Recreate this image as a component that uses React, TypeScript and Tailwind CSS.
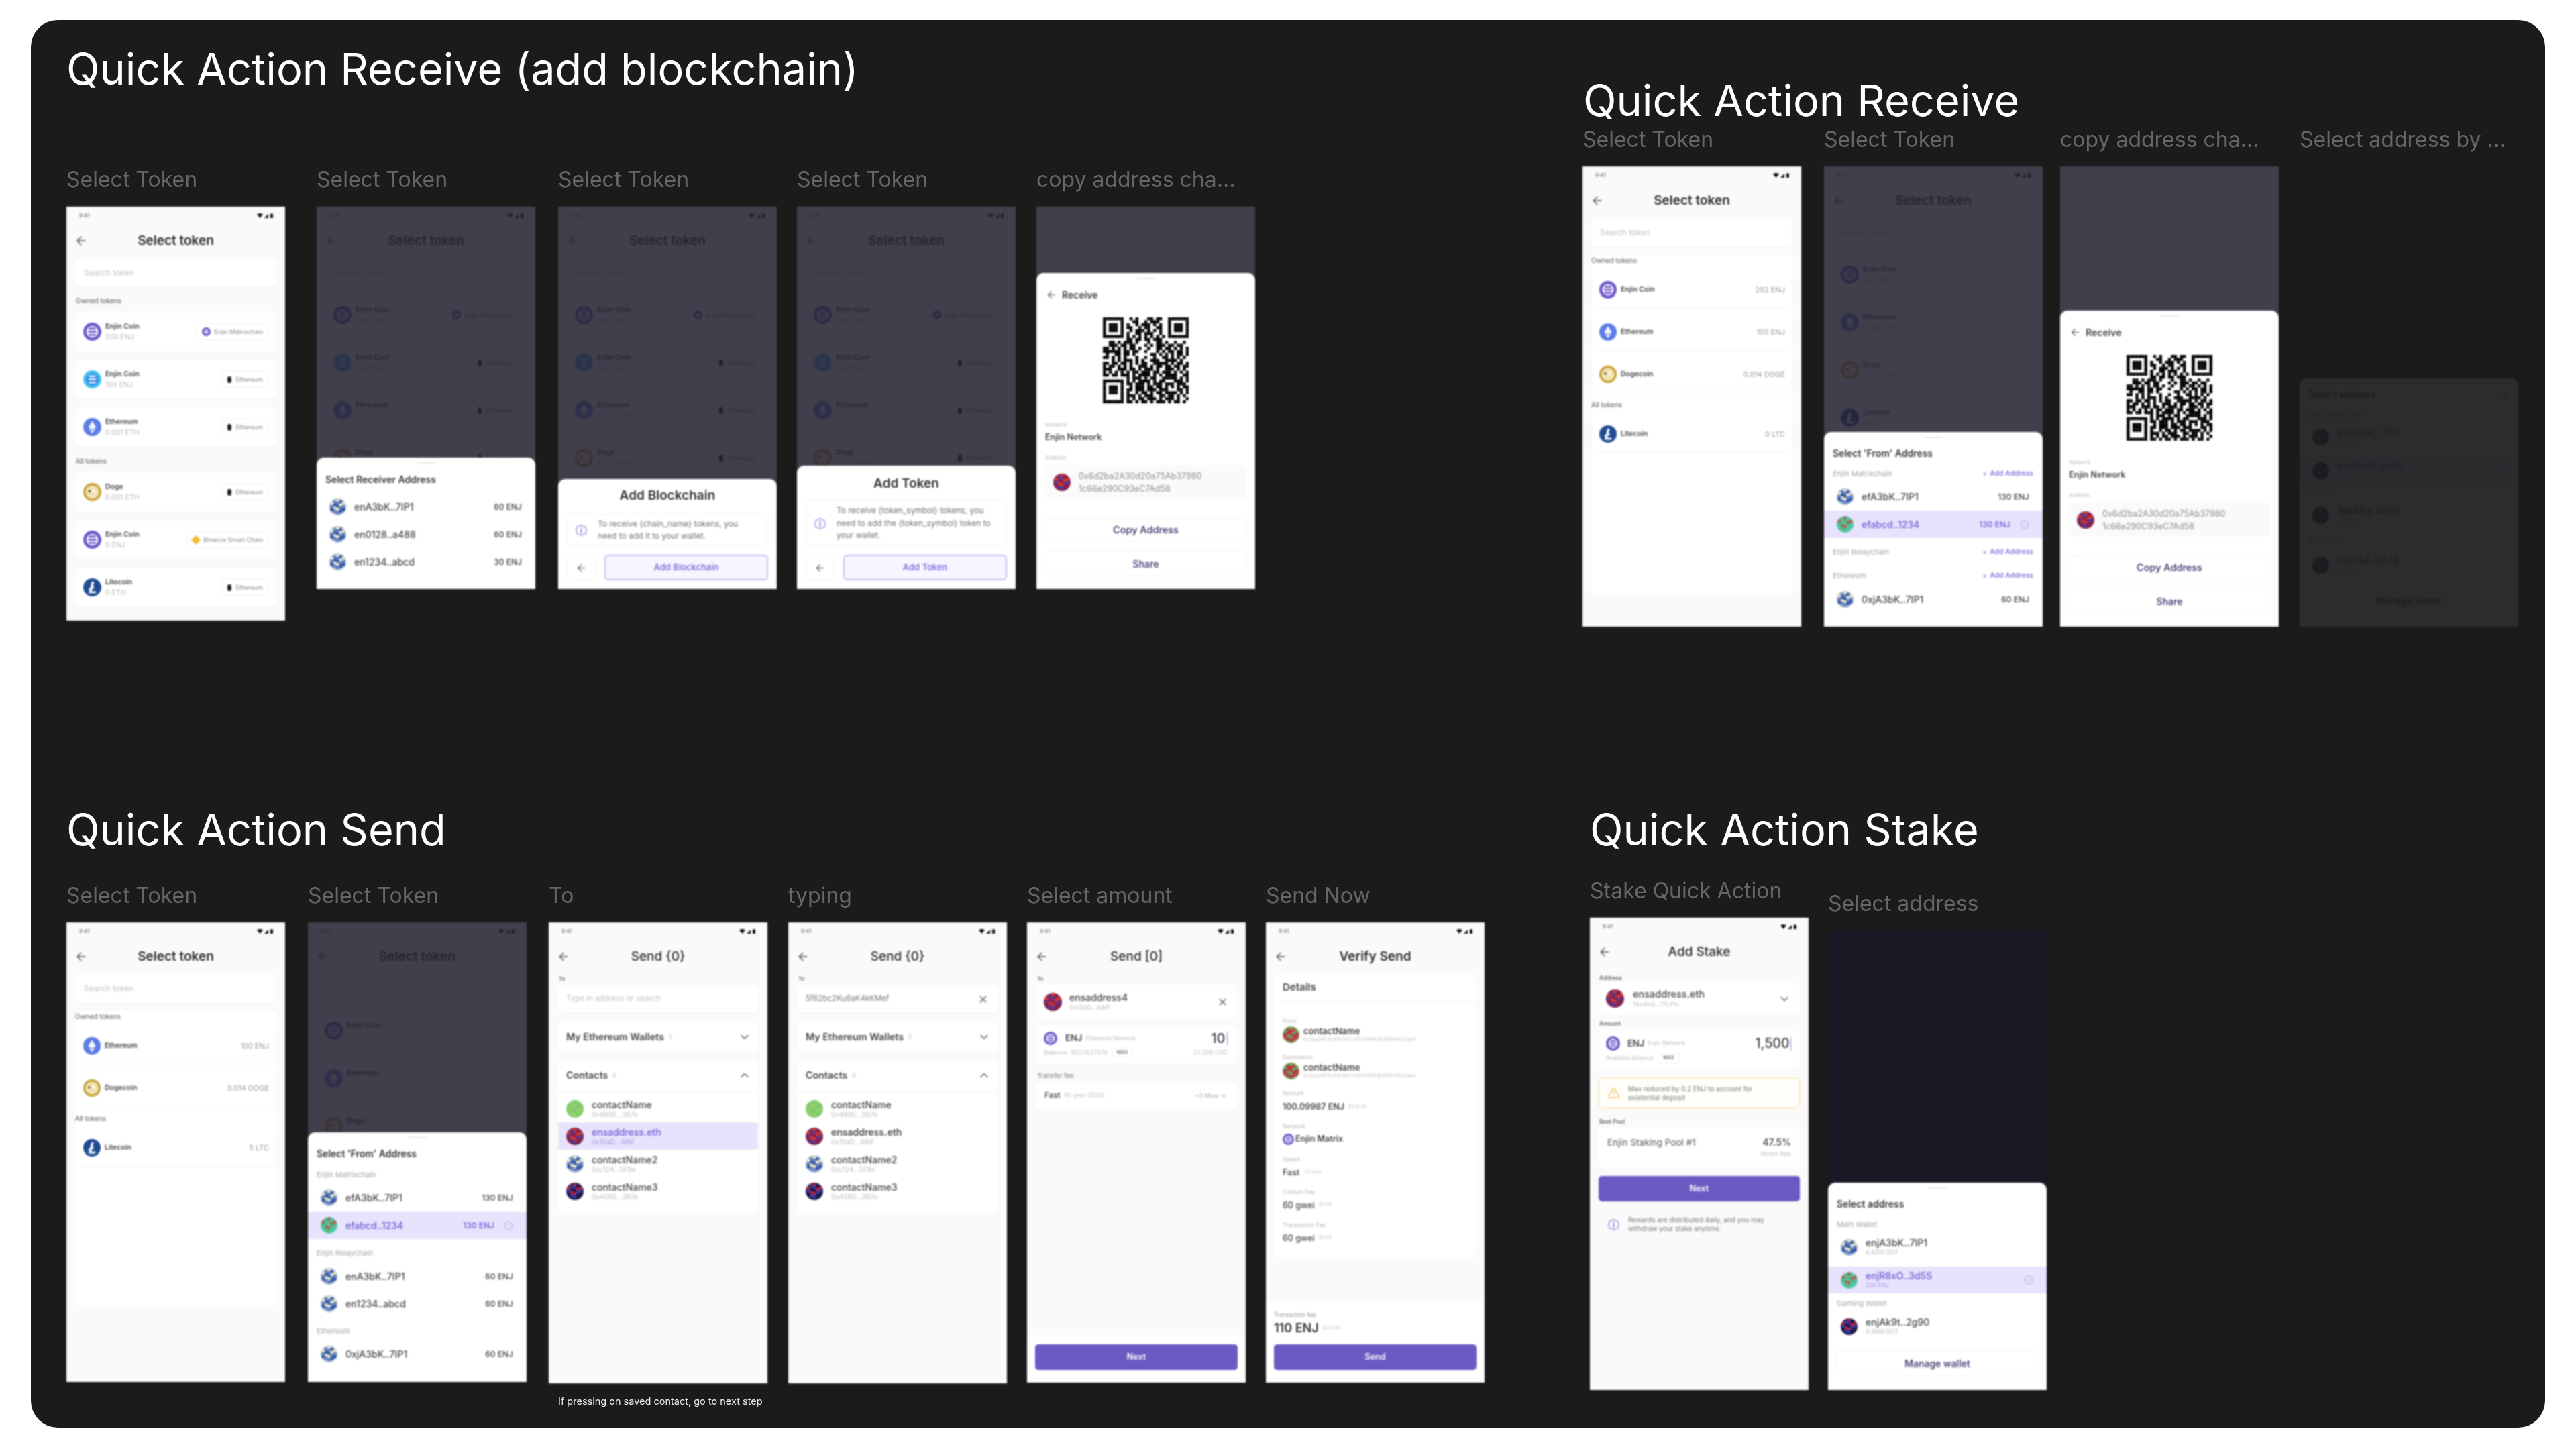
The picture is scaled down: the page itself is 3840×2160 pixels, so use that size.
import { ReactNode } from "react";
import { ArrowLeft, ChevronDown, ChevronUp, X, Plus, CircleCheck, TriangleAlert } from "lucide-react";

// ---- small drawings ----

const HEX_DOTS = [
  [16, 4], [16, 9.5], [16, 15], [16, 20.5], [16, 26.5],
  [10.5, 7], [10.5, 12.5], [10.5, 18.5], [10.5, 24],
  [21.5, 7], [21.5, 12.5], [21.5, 18.5], [21.5, 24],
  [5, 10], [5, 15.5], [5, 21],
  [27, 10], [27, 15.5], [27, 21],
];

const PALETTES: Record<string, string[]> = {
  blue: ["#a9b7d4", "#2f55a4", "#e9e4c4", "#5f82c4"],
  teal: ["#57cdb6", "#44c9b0", "#b5604c", "#5ab77c"],
  red: ["#7c2150", "#8d1f4c", "#d8342a", "#5a3a90"],
  navy: ["#1d1848", "#1d1848", "#c0203f", "#2a3fa8"],
  green: ["#7fce6b", "#86d266", "#79c873", "#9ccc6a"],
  moss: ["#6fa55a", "#c23c44", "#6fa55a", "#b33a44"],
};

function Avatar({ kind, size = 25 }: { kind: string; size?: number }) {
  const p = PALETTES[kind];
  return (
    <svg width={size} height={size} viewBox="0 0 32 32" className="shrink-0">
      <circle cx="16" cy="16" r="16" fill={p[0]} />
      {HEX_DOTS.map(([x, y], i) => (
        <circle key={i} cx={x} cy={y} r="3.300" fill={p[1 + (i * 7 + (x === 16 ? 1 : 0)) % 3]} />
      ))}
    </svg>
  );
}

function TokenIcon({ kind, size = 27 }: { kind: string; size?: number }) {
  if (kind === "enj" || kind === "enjBlue") {
    return (
      <svg width={size} height={size} viewBox="0 0 32 32" className="shrink-0">
        <circle cx="16" cy="16" r="16" fill={kind === "enj" ? "#6c56c9" : "#3fc1ef"} />
        <circle cx="16" cy="16" r="10.500" fill={kind === "enj" ? "#f4f1fd" : "#2c7ee0"} />
        <path d="M11 10.500h10M10 16h12M11 21.500h10" stroke={kind === "enj" ? "#6c56c9" : "#e8fbff"} strokeWidth="3" strokeLinecap="round" />
      </svg>
    );
  }
  if (kind === "eth") {
    return (
      <svg width={size} height={size} viewBox="0 0 32 32" className="shrink-0">
        <circle cx="16" cy="16" r="16" fill="#5b7be6" />
        <path d="M16 5l7 11.500-7 4.200-7-4.200zM16 22.600l6.600-4.100L16 27.500l-6.600-9z" fill="#f3f5ff" />
      </svg>
    );
  }
  if (kind === "doge") {
    return (
      <svg width={size} height={size} viewBox="0 0 32 32" className="shrink-0">
        <circle cx="16" cy="16" r="16" fill="#c6a032" />
        <circle cx="16" cy="16" r="12" fill="#f0e2b4" />
        <circle cx="11" cy="14.500" r="2" fill="#4d4030" />
        <circle cx="19" cy="14.500" r="3" fill="#fdf8e8" />
      </svg>
    );
  }
  return (
    <svg width={size} height={size} viewBox="0 0 32 32" className="shrink-0">
      <circle cx="16" cy="16" r="16" fill="#1f4a94" />
      <path d="M15 6h4.400l-2.600 10 3.400-1.200-.8 2.700-3.400 1.200-1.200 4.300H23l-1 3.500H9.600l1.900-6.500-2.400.8.7-2.500 2.400-.9z" fill="#fff" />
    </svg>
  );
}

function ChainDot({ kind }: { kind: string }) {
  if (kind === "enj") return <span className="h-[13px] w-[13px] shrink-0 rounded-full border-[3px] border-[#6c56c9] bg-[#c9bff0]" />;
  if (kind === "bnb") return <span className="h-[10px] w-[10px] shrink-0 rotate-45 bg-[#f3ba2f]" />;
  return <span className="h-[10px] w-[6px] shrink-0 rounded-full bg-[#222]" />;
}

function InfoBlob({ size = 18 }: { size?: number }) {
  return (
    <svg width={size} height={size} viewBox="0 0 20 20" fill="none" className="shrink-0">
      <path d="M10 1.500l3 2.200 3.600.6.7 3.500 1.200 2.200-1.200 2.200-.7 3.500-3.600.6-3 2.200-3-2.200-3.600-.6-.7-3.500L1.500 10l1.200-2.200.7-3.500 3.600-.6z" stroke="#a898e6" strokeWidth="1.600" />
      <path d="M10 6v1.200M10 9v5" stroke="#7d69d6" strokeWidth="1.600" strokeLinecap="round" />
    </svg>
  );
}

const QR_ROWS = [
  "#######..#.#...##.##..#######",
  "#.....#...##..#.###...#.....#",
  "#.###.#.#..#.###.#.#..#.###.#",
  "#.###.#.##..#.##..##..#.###.#",
  "#.###.#..#.###.#.#.#..#.###.#",
  "#.....#.#..##.###..#..#.....#",
  "#######.#.#.#.#.#.#.#.#######",
  "........##.##.##.###.........",
  "..##.#.###.#...#..##.#..#..#.",
  "..###.##.##...#.#.###.##.##..",
  "##.#.#.#.##.#..#..##.##.#.#.#",
  "######.##.##..#...#.#.##.##.#",
  ".#..##.##.#.....##.#.#.#.##.#",
  "##.#.#.#...#..#..#..##.#.#.#.",
  "...#.#.###.#.#..###..####.#..",
  "##.##.##.#.#.##..#####.#.##.#",
  "#.##.#.#.#..###.#.##.##.##.##",
  "###..###.##.#.###.#..###.#.#.",
  "#.#.#.#.#.##.###.##.###.#.#.#",
  "##.##.###.#.####.#.#.####..##",
  "........#.###.#.##..#####.#.#",
  "#######.#.#.####.#.##...###.#",
  "#.....#.##.###.#.###.###.###.",
  "#.###.#..#.###.##.##.#.#.#.##",
  "#.###.#.##.###.###.###...##.#",
  "#.###.#.#..#.##.#.##.####.#.#",
  "#.....#.###.#.###..##.##.#.#.",
  "#.....#.#.#.##.###.#.###.#..#",
  "#######.##.#.##.#.###.#.##.#.",
];

function QrCode() {
  return (
    <svg width="128" height="128" viewBox="0 0 29 29" className="mx-auto block">
      {QR_ROWS.map((row, y) =>
        row.split("").map((c, x) => (c === "#" ? <rect key={`${x}-${y}`} x={x} y={y} width="1.020" height="1.020" fill="#000" /> : null))
      )}
    </svg>
  );
}

function StatusIcons() {
  return (
    <svg width="25" height="7" viewBox="0 0 25 7">
      <path d="M0 1.500C3-.5 6-.5 9 1.500L4.500 7z" fill="#111" />
      <path d="M11 7l6-6v6z" fill="#111" />
      <rect x="20" y="0.500" width="4" height="6.500" rx="0.500" fill="#111" />
    </svg>
  );
}

// ---- phone building blocks ----

function StatusBar() {
  return (
    <div className="flex h-[26px] items-center justify-between pl-[19px] pr-[17px]">
      <span className="text-[8px] text-[#666]">9:41</span>
      <StatusIcons />
    </div>
  );
}

function Header({ title, weight = "font-semibold" }: { title: string; weight?: string }) {
  return (
    <div className="grid h-[50px] grid-cols-[48px_1fr_48px] items-center">
      <ArrowLeft size={20} strokeWidth={1.600} className="ml-[12px] text-[#555]" />
      <span className={`text-center text-[19px] text-[#2b2b30] ${weight}`}>{title}</span>
    </div>
  );
}

function Search({ text }: { text: string }) {
  return <div className="mx-[14px] mt-[2px] flex h-[41px] items-center rounded-[6px] bg-white pl-[12px] text-[12px] text-[#c2c2c2] shadow-[0_1px_2px_rgba(0,0,0,0.03)]">{text}</div>;
}

function SmallHead({ children, className = "" }: { children: ReactNode; className?: string }) {
  return <div className={`h-[12px] text-[10px] leading-[12px] text-[#555] ${className}`}>{children}</div>;
}

function TokenRow({ icon, name, sub, chip, chipName }: { icon: string; name: string; sub: string; chip?: string; chipName?: string }) {
  return (
    <div className="flex h-[59px] items-center rounded-[8px] bg-white px-[11px] shadow-[0_1px_3px_rgba(0,0,0,0.03)]">
      <TokenIcon kind={icon} />
      <div className="ml-[6px] flex flex-col gap-[3px]">
        <span className="text-[10.500px] font-semibold leading-[13px] text-[#444]">{name}</span>
        <span className="text-[10.500px] leading-[13px] text-[#b9b9b9]">{sub}</span>
      </div>
      {chip && (
        <div className="ml-auto flex h-[25px] items-center gap-[6px] rounded-[5px] border border-[#f1f1f1] bg-white px-[7px] text-[9px] text-[#888]">
          <ChainDot kind={chip} />
          {chipName}
        </div>
      )}
    </div>
  );
}

function ValueRow({ icon, name, value }: { icon: string; name: string; value: string }) {
  return (
    <div className="flex h-[52px] items-center rounded-[8px] bg-white pl-[12px] pr-[11px] shadow-[0_1px_3px_rgba(0,0,0,0.04)]">
      <TokenIcon kind={icon} size={26} />
      <span className="ml-[6px] text-[10.500px] font-semibold text-[#444]">{name}</span>
      <span className="ml-auto text-[11px] text-[#999]">{value}</span>
    </div>
  );
}

function TokenScreen({ children }: { children: ReactNode }) {
  return (
    <>
      <StatusBar />
      <Header title="Select token" />
      <Search text="Search token" />
      {children}
    </>
  );
}

function ChainTokens() {
  return (
    <div className="mx-[14px] mt-[15px]">
      <SmallHead className="mb-[11px]">Owned tokens</SmallHead>
      <div className="flex flex-col gap-[12px]">
        <TokenRow icon="enj" name="Enjin Coin" sub="200 ENJ" chip="enj" chipName="Enjin Matrixchain" />
        <TokenRow icon="enjBlue" name="Enjin Coin" sub="100 ENJ" chip="eth" chipName="Ethereum" />
        <TokenRow icon="eth" name="Ethereum" sub="0.001 ETH" chip="eth" chipName="Ethereum" />
      </div>
      <SmallHead className="mb-[11px] mt-[15px]">All tokens</SmallHead>
      <div className="flex flex-col gap-[12px]">
        <TokenRow icon="doge" name="Doge" sub="0.001 ETH" chip="eth" chipName="Ethereum" />
        <TokenRow icon="enj" name="Enjin Coin" sub="0 ENJ" chip="bnb" chipName="Binance Smart Chain" />
        <TokenRow icon="ltc" name="Litecoin" sub="0 ETH" chip="eth" chipName="Ethereum" />
      </div>
    </div>
  );
}

// what sits behind the sheets: same rows, no section heads
function DimChainTokens() {
  return (
    <div className="mx-[14px] mt-[13px] flex flex-col gap-[12px]">
      <TokenRow icon="enj" name="Enjin Coin" sub="200 ENJ" chip="enj" chipName="Enjin Matrixchain" />
      <TokenRow icon="enjBlue" name="Enjin Coin" sub="100 ENJ" chip="eth" chipName="Ethereum" />
      <TokenRow icon="eth" name="Ethereum" sub="0.001 ETH" chip="eth" chipName="Ethereum" />
      <TokenRow icon="doge" name="Doge" sub="0.001 ETH" chip="eth" chipName="Ethereum" />
    </div>
  );
}

function DimTokens({ withLtc = true }: { withLtc?: boolean }) {
  return (
    <div className="mx-[14px] mt-[13px] flex flex-col gap-[12px]">
      <TokenRow icon="enj" name="Enjin Coin" sub="200 ENJ" />
      <TokenRow icon="eth" name="Ethereum" sub="0.016 ETH" />
      <TokenRow icon="doge" name="Doge" sub="0.014 ETH" />
      {withLtc && <TokenRow icon="ltc" name="Litecoin" sub="0 ETH" />}
    </div>
  );
}

function ValueList({ height, owned, all }: { height: string; owned: [string, string, string][]; all: [string, string, string][] }) {
  return (
    <div className={`mx-[13px] mt-[13px] rounded-[8px] bg-white pt-[2px] ${height}`}>
      <SmallHead className="mb-[12px]">Owned tokens</SmallHead>
      <div className="flex flex-col gap-[11px]">
        {owned.map(([i, n, v]) => <ValueRow key={n} icon={i} name={n} value={v} />)}
      </div>
      <SmallHead className="mb-[12px] mt-[13px]">All tokens</SmallHead>
      {all.map(([i, n, v]) => <ValueRow key={n} icon={i} name={n} value={v} />)}
    </div>
  );
}

function Dim() {
  return <div className="absolute inset-0 bg-[#262331]/[0.87]" />;
}

function Sheet({ height, children, handle = true }: { height: string; children: ReactNode; handle?: boolean }) {
  return (
    <div className={`absolute inset-x-0 bottom-0 rounded-t-[11px] bg-white ${height}`}>
      {handle && <div className="mx-auto mt-[7px] h-[2px] w-[27px] rounded-full bg-[#e8e8e8]" />}
      {children}
    </div>
  );
}

function SheetTitle({ children, className = "" }: { children: ReactNode; className?: string }) {
  return <div className={`h-[14px] px-[13px] text-[14px] font-semibold leading-[14px] text-[#34343a] ${className}`}>{children}</div>;
}

function AddrRow({ avatar, addr, amount, active, sub }: { avatar: string; addr: string; amount?: string; active?: boolean; sub?: string }) {
  return (
    <div className={`flex items-center pl-[19px] pr-[20px] ${sub ? "h-[40px]" : "h-[41px]"} ${active ? "bg-[#e8e3fc] text-[#6e5ad6]" : "text-[#44444a]"}`}>
      <Avatar kind={avatar} />
      <div className="ml-[12px] flex flex-col">
        <span className="text-[14px] font-medium leading-[16px]">{addr}</span>
        {sub && <span className={`text-[8.500px] leading-[12px] ${active ? "text-[#a89ae6]" : "text-[#b5b5b5]"}`}>{sub}</span>}
      </div>
      {amount && <span className="ml-auto text-[12px] font-medium">{amount}</span>}
      {active && <CircleCheck size={14} strokeWidth={1.400} className={`${amount ? "ml-[14px]" : "ml-auto"} text-[#9d8de6]`} />}
    </div>
  );
}

function SectionHead({ title, add, className = "" }: { title: string; add?: boolean; className?: string }) {
  return (
    <div className={`flex h-[14px] items-center justify-between pl-[13px] pr-[14px] ${className}`}>
      <span className="text-[11px] text-[#a5a5a5]">{title}</span>
      {add && (
        <span className="flex items-center gap-[3px] text-[10.500px] font-medium text-[#7a66dc]">
          <Plus size={9} strokeWidth={2} />
          Add Address
        </span>
      )}
    </div>
  );
}

function AddSheet({ title, cta, text, height, boxClass, titleClass }: { title: string; cta: string; text: ReactNode; height: string; boxClass: string; titleClass: string }) {
  return (
    <Sheet height={height} handle={false}>
      <div className={`text-center text-[19px] font-semibold leading-[20px] text-[#303036] ${titleClass}`}>{title}</div>
      <div className={`mx-[13px] flex items-center gap-[15px] rounded-[7px] border border-[#f4f4f4] pl-[11px] ${boxClass}`}>
        <InfoBlob size={19} />
        <p className="whitespace-nowrap text-[12px] leading-[18.500px] text-[#707070]">{text}</p>
      </div>
      <div className="mx-[13px] mt-[12px] flex h-[38px] gap-[13px]">
        <div className="flex w-[43px] items-center justify-center rounded-[6px] border border-[#f4f4f4]">
          <ArrowLeft size={17} strokeWidth={1.600} className="text-[#555]" />
        </div>
        <div className="flex flex-1 items-center justify-center rounded-[6px] border-2 border-[#c9bef0] bg-[#f7f5ff] text-[13px] font-medium text-[#7562d8]">{cta}</div>
      </div>
    </Sheet>
  );
}

function ReceiveSheet() {
  return (
    <Sheet height="h-[471px]">
      <div className="mt-[16px] flex h-[14px] items-center gap-[7px] pl-[14px]">
        <ArrowLeft size={17} strokeWidth={1.600} className="text-[#555]" />
        <span className="text-[14px] font-semibold text-[#44444a]">Receive</span>
      </div>
      <div className="mt-[27px]">
        <QrCode />
      </div>
      <div className="mt-[27px] h-[10px] pl-[13px] text-[8px] leading-[10px] text-[#bbb]">Network</div>
      <div className="mt-[7px] h-[14px] pl-[13px] text-[12.500px] font-semibold leading-[14px] text-[#44444a]">Enjin Network</div>
      <div className="mt-[18px] h-[10px] pl-[13px] text-[8px] leading-[10px] text-[#bbb]">Address</div>
      <div className="mx-[13px] mt-[6px] flex h-[51px] items-center gap-[12px] rounded-[7px] bg-[#fafafa] pl-[12px]">
        <Avatar kind="red" size={26} />
        <div className="text-[12.500px] leading-[19px] text-[#8a8a8a]">
          0x6d2ba2A30d20a75Ab37980
          <br />
          1c66e290C93eC7Ad58
        </div>
      </div>
      <div className="mx-[13px] mt-[28px] flex h-[36px] items-center justify-center rounded-[6px] border border-[#f5f5f5] text-[14.500px] font-medium text-[#2f2c64]">Copy Address</div>
      <div className="mx-[13px] mt-[13px] flex h-[38px] items-center justify-center rounded-[6px] border border-[#f5f5f5] text-[14px] font-medium text-[#2f2c64]">Share</div>
    </Sheet>
  );
}

function ContactRow({ avatar, name, addr, active, strong }: { avatar: string; name: string; addr: string; active?: boolean; strong?: boolean }) {
  return (
    <div className={`flex h-[41px] items-center pl-[12px] ${active ? "bg-[#e8e3fc]" : ""}`}>
      <Avatar kind={avatar} size={26} />
      <div className="ml-[12px] flex flex-col">
        <span className={`text-[14px] leading-[17px] ${active ? "text-[#6e5ad6]" : "text-[#44444a]"} ${strong ? "font-semibold" : "font-medium"}`}>{name}</span>
        <span className={`text-[10px] leading-[13px] ${active ? "text-[#a89ae6]" : "text-[#bdbdbd]"}`}>{addr}</span>
      </div>
    </div>
  );
}

function SendToScreen({ typed }: { typed?: boolean }) {
  return (
    <>
      <StatusBar />
      <Header title="Send {0}" weight="font-medium" />
      <div className="ml-[15px] mt-[2px] h-[12px] text-[8px] font-medium leading-[12px] text-[#555]">To</div>
      <div className="mx-[14px] mt-[4px] flex h-[40px] items-center justify-between rounded-[6px] bg-white pl-[12px] pr-[13px] text-[11.500px] shadow-[0_1px_2px_rgba(0,0,0,0.03)]">
        {typed ? <span className="text-[#777]">5f62bc2Ku6aK4kKMef</span> : <span className="text-[#c2c2c2]">Type in address or search</span>}
        {typed && <X size={17} strokeWidth={1.800} className="text-[#555]" />}
      </div>
      <div className="mx-[14px] mt-[15px] flex h-[43px] items-center rounded-[6px] bg-white pl-[12px] pr-[10px]">
        <span className="text-[14.300px] font-semibold text-[#44444a]">My Ethereum Wallets</span>
        <span className="ml-[6px] text-[10px] text-[#ccc]">3</span>
        <ChevronDown size={20} strokeWidth={1.500} className="ml-auto text-[#555]" />
      </div>
      <div className="mx-[14px] mt-[14px] flex h-[44px] items-center rounded-t-[6px] bg-white pl-[12px] pr-[10px]">
        <span className="text-[14.300px] font-semibold text-[#44444a]">Contacts</span>
        <span className="ml-[6px] text-[10px] text-[#ccc]">4</span>
        <ChevronUp size={20} strokeWidth={1.500} className="ml-auto text-[#555]" />
      </div>
      <div className="mx-[14px] mt-[4px] h-[180px] rounded-b-[6px] bg-white pt-[3px]">
        <ContactRow avatar="green" name="contactName" addr="0x4890...3B7e" />
        <ContactRow avatar="red" name="ensaddress.eth" addr="0x15aD...A8IF" active={!typed} strong={typed} />
        <ContactRow avatar="blue" name="contactName2" addr="0xc124...5F9e" />
        <ContactRow avatar="navy" name="contactName3" addr="0x4090...2B7e" />
      </div>
    </>
  );
}

function BottomBar({ children, label, height }: { children?: ReactNode; label: string; height: string }) {
  return (
    <div className={`absolute inset-x-0 bottom-0 flex flex-col justify-end rounded-t-[8px] bg-white px-[12px] pb-[19px] ${height}`}>
      {children}
      <div className="flex h-[38px] items-center justify-center rounded-[5px] bg-[#6a5bc3] text-[12.500px] font-semibold text-white">{label}</div>
    </div>
  );
}

function Detail({ label, children, className = "" }: { label: string; children: ReactNode; className?: string }) {
  return (
    <div className={className}>
      <div className="h-[12px] text-[8.500px] leading-[12px] text-[#b9b9b9]">{label}</div>
      <div className="mt-[4px] flex h-[20px] items-center gap-[6px]">{children}</div>
    </div>
  );
}

function PersonDetail({ name, addr }: { name: string; addr: string }) {
  return (
    <>
      <Avatar kind="moss" />
      <div className="flex flex-col">
        <span className="text-[13px] font-semibold leading-[14px] text-[#44444a]">{name}</span>
        <span className="text-[7px] leading-[11px] text-[#c5c5c5]">{addr}</span>
      </div>
    </>
  );
}

function AmountLine({ value, note, bold }: { value: string; note: string; bold?: boolean }) {
  return (
    <>
      <span className={`text-[12.500px] leading-[14px] text-[#44444a] ${bold ? "font-semibold" : "font-medium"}`}>{value}</span>
      <span className="text-[7px] text-[#c5c5c5]">{note}</span>
    </>
  );
}

function SelectAddress({ muted }: { muted?: boolean }) {
  if (muted) {
    return (
      <div className="absolute inset-x-0 bottom-0 h-[370px] rounded-t-[11px] bg-white">
        <div className="flex items-center justify-between pr-[14px] pt-[17px]">
          <SheetTitle>Select address</SheetTitle>
          <X size={12} className="text-[#333]" />
        </div>
        <SectionHead title="Enjin Relaychain" className="mt-[15px]" />
        <div className="mt-[7px]">
          <AddrRow avatar="navy" addr="enjA3bK..7IP1" sub="4.5 DOT" />
        </div>
        <div className="mt-[10px]">
          <AddrRow avatar="navy" addr="enjR8xO..3d5S" sub="0 ENJ" active />
        </div>
        <SectionHead title="Solana" className="mt-[6px]" />
        <div className="mt-[7px]">
          <AddrRow avatar="navy" addr="7pk86q..kPOx" sub="2.5 SOL" />
        </div>
        <SectionHead title="Ethereum" className="mt-[10px]" />
        <div className="mt-[10px]">
          <AddrRow avatar="navy" addr="0x1234..5678" sub="1.2 ETH" />
        </div>
        <div className="mx-[13px] mt-[8px] flex h-[50px] items-center justify-center rounded-[6px] text-[14px] font-medium text-[#222]">Manage wallet</div>
      </div>
    );
  }
  return (
    <Sheet height="h-[309px]">
      <SheetTitle className="mt-[16px]">Select address</SheetTitle>
      <SectionHead title="Main Wallet" className="mt-[16px]" />
      <div className="mt-[7px]">
        <AddrRow avatar="blue" addr="enjA3bK..7IP1" sub="4.3200 DOT" />
      </div>
      <div className="mt-[9px]">
        <AddrRow avatar="teal" addr="enjR8xO..3d5S" sub="200 ENJ" active />
      </div>
      <SectionHead title="Gaming Wallet" className="mt-[8px]" />
      <div className="mt-[7px]">
        <AddrRow avatar="navy" addr="enjAk9t..2g90" sub="4.3800 DOT" />
      </div>
      <div className="mx-[13px] mt-[15px] flex h-[40px] items-center justify-center rounded-[6px] border border-[#f5f5f5] text-[14px] font-medium text-[#2f2c64]">Manage wallet</div>
    </Sheet>
  );
}

// ---- canvas ----

function Frame({ label, pos, height, bg = "bg-[#fafafa]", children }: { label: string; pos: string; height: string; bg?: string; children: ReactNode }) {
  return (
    <div className={`absolute flex w-[326px] flex-col gap-[24px] ${pos}`}>
      <div className="h-[32px] whitespace-nowrap text-[32px] leading-[32px] text-[#666]">{label}</div>
      <div className={`relative w-full overflow-hidden blur-[0.8px] ${height} ${bg}`}>{children}</div>
    </div>
  );
}

function CanvasTitle({ children, pos }: { children: ReactNode; pos: string }) {
  return <div className={`absolute whitespace-nowrap text-[64.800px] font-normal leading-[72px] text-white ${pos}`}>{children}</div>;
}

export default function App() {
  const rowsG: [string, string, string][] = [["enj", "Enjin Coin", "202 ENJ"], ["eth", "Ethereum", "105 ENJ"], ["doge", "Dogecoin", "0.014 DOGE"]];
  const rowsS: [string, string, string][] = [["eth", "Ethereum", "100 ENJ"], ["doge", "Dogecoin", "0.014 DOGE"]];
  return (
    <div className="relative h-[2160px] w-[3840px] bg-white pt-[30px] [font-family:Inter,sans-serif]">
      <div className="ml-[46px] h-[2098px] w-[3748px] rounded-[40px] bg-[#1b1b1c]" />
      <div className="absolute inset-0 blur-[0.6px]">
        <CanvasTitle pos="left-[99px] top-[67px]">Quick Action Receive (add blockchain)</CanvasTitle>
        <CanvasTitle pos="left-[2360px] top-[114px]">Quick Action Receive</CanvasTitle>
        <CanvasTitle pos="left-[99px] top-[1201px]">Quick Action Send</CanvasTitle>
        <CanvasTitle pos="left-[2370px] top-[1201px]">Quick Action Stake</CanvasTitle>

        {/* add blockchain flow */}
        <Frame label="Select Token" pos="left-[99px] top-[252px]" height="h-[617px]">
          <TokenScreen><ChainTokens /></TokenScreen>
        </Frame>
        <Frame label="Select Token" pos="left-[472px] top-[252px]" height="h-[570px]">
          <TokenScreen><DimChainTokens /></TokenScreen>
          <Dim />
          <Sheet height="h-[196px]">
            <SheetTitle className="mt-[17px]">Select Receiver Address</SheetTitle>
            <div className="mt-[13px]">
              <AddrRow avatar="blue" addr="enA3bK..7IP1" amount="60 ENJ" />
              <AddrRow avatar="blue" addr="en0128..a488" amount="60 ENJ" />
              <AddrRow avatar="blue" addr="en1234..abcd" amount="30 ENJ" />
            </div>
          </Sheet>
        </Frame>
        <Frame label="Select Token" pos="left-[832px] top-[252px]" height="h-[570px]">
          <TokenScreen><DimChainTokens /></TokenScreen>
          <Dim />
          <AddSheet title="Add Blockchain" cta="Add Blockchain" height="h-[164px]" titleClass="pt-[15px]" boxClass="mt-[16px] h-[50px]" text={<>To receive {"{chain_name}"} tokens, you<br />need to add it to your wallet.</>} />
        </Frame>
        <Frame label="Select Token" pos="left-[1188px] top-[252px]" height="h-[570px]">
          <TokenScreen><DimChainTokens /></TokenScreen>
          <Dim />
          <AddSheet title="Add Token" cta="Add Token" height="h-[184px]" titleClass="pt-[17px]" boxClass="mt-[14px] h-[70px]" text={<>To receive {"{token_symbol}"} tokens, you<br />need to add the {"{token_symbol}"} token to<br />your wallet.</>} />
        </Frame>
        <Frame label="copy address cha..." pos="left-[1545px] top-[252px]" height="h-[570px]" bg="bg-[#423f4b]">
          <ReceiveSheet />
        </Frame>

        {/* receive flow */}
        <Frame label="Select Token" pos="left-[2359px] top-[192px]" height="h-[686px]">
          <StatusBar />
          <Header title="Select token" />
          <Search text="Search token" />
          <ValueList height="h-[505px]" owned={rowsG} all={[["ltc", "Litecoin", "0 LTC"]]} />
        </Frame>
        <Frame label="Select Token" pos="left-[2719px] top-[192px]" height="h-[686px]">
          <StatusBar />
          <Header title="Select token" />
          <Search text="Search token" />
          <DimTokens />
          <Dim />
          <Sheet height="h-[290px]">
            <SheetTitle className="mt-[16px]">Select 'From' Address</SheetTitle>
            <SectionHead title="Enjin Matrixchain" add className="mt-[16px]" />
            <div className="mt-[7px]">
              <AddrRow avatar="blue" addr="efA3bK..7IP1" amount="130 ENJ" />
              <AddrRow avatar="teal" addr="efabcd..1234" amount="130 ENJ" active />
            </div>
            <SectionHead title="Enjin Relaychain" add className="mt-[14px]" />
            <SectionHead title="Ethereum" add className="mt-[21px]" />
            <div className="mt-[8px]">
              <AddrRow avatar="blue" addr="0xjA3bK..7IP1" amount="60 ENJ" />
            </div>
          </Sheet>
        </Frame>
        <Frame label="copy address cha..." pos="left-[3071px] top-[192px]" height="h-[686px]" bg="bg-[#423f4b]">
          <ReceiveSheet />
        </Frame>
        <Frame label="Select address by ..." pos="left-[3428px] top-[192px]" height="h-[686px]" bg="bg-transparent">
          <div className="absolute inset-0 opacity-[0.08]">
            <SelectAddress muted />
          </div>
        </Frame>

        {/* send flow */}
        <Frame label="Select Token" pos="left-[99px] top-[1319px]" height="h-[685px]">
          <StatusBar />
          <Header title="Select token" />
          <Search text="Search token" />
          <ValueList height="h-[441px]" owned={rowsS} all={[["ltc", "Litecoin", "5 LTC"]]} />
        </Frame>
        <Frame label="Select Token" pos="left-[459px] top-[1319px]" height="h-[685px]">
          <StatusBar />
          <Header title="Select token" />
          <Search text="Search token" />
          <DimTokens withLtc={false} />
          <Dim />
          <Sheet height="h-[372px]">
            <SheetTitle className="mt-[16px]">Select 'From' Address</SheetTitle>
            <SectionHead title="Enjin Matrixchain" className="mt-[17px]" />
            <div className="mt-[7px]">
              <AddrRow avatar="blue" addr="efA3bK..7IP1" amount="130 ENJ" />
              <AddrRow avatar="teal" addr="efabcd..1234" amount="130 ENJ" active />
            </div>
            <SectionHead title="Enjin Relaychain" className="mt-[14px]" />
            <div className="mt-[7px]">
              <AddrRow avatar="blue" addr="enA3bK..7IP1" amount="60 ENJ" />
              <AddrRow avatar="blue" addr="en1234..abcd" amount="60 ENJ" />
            </div>
            <SectionHead title="Ethereum" className="mt-[13px]" />
            <div className="mt-[7px]">
              <AddrRow avatar="blue" addr="0xjA3bK..7IP1" amount="60 ENJ" />
            </div>
          </Sheet>
        </Frame>
        <Frame label="To" pos="left-[818px] top-[1319px]" height="h-[687px]">
          <SendToScreen />
        </Frame>
        <Frame label="typing" pos="left-[1175px] top-[1319px]" height="h-[687px]">
          <SendToScreen typed />
        </Frame>
        <Frame label="Select amount" pos="left-[1531px] top-[1319px]" height="h-[686px]">
          <StatusBar />
          <Header title="Send [0]" weight="font-medium" />
          <div className="ml-[15px] mt-[2px] h-[12px] text-[8px] font-medium leading-[12px] text-[#555]">To</div>
          <div className="mx-[14px] mt-[3px] flex h-[50px] items-center rounded-[6px] bg-white pl-[11px] pr-[12px]">
            <Avatar kind="red" size={27} />
            <div className="ml-[11px] flex flex-col">
              <span className="text-[14px] font-medium leading-[17px] text-[#44444a]">ensaddress4</span>
              <span className="text-[9.500px] leading-[14px] text-[#bdbdbd]">0x15aD...A8IF</span>
            </div>
            <X size={17} strokeWidth={1.800} className="ml-auto text-[#555]" />
          </div>
          <div className="mx-[14px] mt-[11px] flex h-[56px] flex-col justify-center rounded-[6px] bg-white pl-[11px] pr-[13px]">
            <div className="flex h-[24px] items-center">
              <TokenIcon kind="enj" size={20} />
              <span className="ml-[12px] text-[13px] font-semibold text-[#44444a]">ENJ</span>
              <span className="ml-[5px] text-[8.500px] text-[#c0c0c0]">Ethereum Network</span>
              <span className="ml-auto text-[20px] font-medium text-[#44444a]">10</span>
              <span className="ml-[2px] h-[20px] w-[1.500px] bg-[#8f7fe0]" />
            </div>
            <div className="flex h-[18px] items-center text-[9px] text-[#c0c0c0]">
              Balance: 1621.1627574
              <span className="ml-[7px] rounded-[3px] border border-[#f0f0f0] px-[6px] py-[1px] text-[7px] font-semibold text-[#777]">MAX</span>
              <span className="ml-auto">22,556 USD</span>
            </div>
          </div>
          <div className="ml-[15px] mt-[13px] h-[12px] text-[9.500px] leading-[12px] text-[#777]">Transfer fee</div>
          <div className="mx-[14px] mt-[4px] flex h-[39px] items-center rounded-[6px] bg-white pl-[12px] pr-[13px]">
            <span className="text-[11.500px] font-semibold text-[#555]">Fast</span>
            <span className="ml-[6px] text-[8.500px] text-[#c5c5c5]">60 gwei ($120)</span>
            <span className="ml-auto text-[9px] text-[#aaa]">~3 Mins</span>
            <ChevronDown size={12} className="ml-[2px] text-[#777]" />
          </div>
          <BottomBar label="Next" height="h-[71px]" />
        </Frame>
        <Frame label="Send Now" pos="left-[1887px] top-[1319px]" height="h-[686px]">
          <StatusBar />
          <Header title="Verify Send" />
          <div className="mx-[13px] h-[424px] rounded-[8px] bg-white">
            <div className="flex h-[43px] items-center border-b border-[#f5f5f5] pl-[12px] text-[15px] font-semibold text-[#44444a]">Details</div>
            <div className="pl-[12px] pt-[22px]">
              <Detail label="From">
                <PersonDetail name="contactName" addr="0x2ba2f4C8cK9c1bFCv6DV9WKdK2KBHAKCGak4" />
              </Detail>
              <Detail label="Destination" className="mt-[18px]">
                <PersonDetail name="contactName" addr="0x2ba2f4C8cK9c1bFCv6DV9WKdK2KBHAKCGak4" />
              </Detail>
              <Detail label="Amount" className="mt-[18px]">
                <AmountLine value="100.09987 ENJ" note="$1,41.20" bold />
              </Detail>
              <Detail label="Network" className="mt-[12.500px]">
                <TokenIcon kind="enj" size={17} />
                <span className="-ml-[4px] text-[12.500px] font-semibold text-[#44444a]">Enjin Matrix</span>
              </Detail>
              <Detail label="Speed" className="mt-[13px]">
                <AmountLine value="Fast" note="~3 mins" />
              </Detail>
              <Detail label="Custom Fee" className="mt-[13px]">
                <AmountLine value="60 gwei" note="$4.09" />
              </Detail>
              <Detail label="Transaction Fee" className="mt-[13px]">
                <AmountLine value="60 gwei" note="$4.09" />
              </Detail>
            </div>
          </div>
          <BottomBar label="Send" height="h-[122px]">
            <div className="text-[8.500px] leading-[12px] text-[#999]">Transaction fee</div>
            <div className="mb-[12px] mt-[2px] flex items-center gap-[6px]">
              <span className="text-[18px] font-semibold leading-[24px] text-[#34343a]">110 ENJ</span>
              <span className="text-[7px] text-[#c5c5c5]">$241.09</span>
            </div>
          </BottomBar>
        </Frame>
        <div className="absolute left-[832px] top-[2079px] text-[14.500px] leading-[20px] text-[#e8e8e8]">If pressing on saved contact, go to next step</div>

        {/* stake flow */}
        <Frame label="Stake Quick Action" pos="left-[2370px] top-[1312px]" height="h-[704px]">
          <StatusBar />
          <Header title="Add Stake" weight="font-medium" />
          <div className="ml-[14px] mt-[8px] h-[12px] text-[8.500px] font-medium leading-[12px] text-[#555]">Address</div>
          <div className="mx-[14px] mt-[1px] flex h-[47px] items-center rounded-[6px] bg-white pl-[10px] pr-[12px]">
            <Avatar kind="red" size={27} />
            <div className="ml-[13px] flex flex-col">
              <span className="text-[14.500px] font-medium leading-[17px] text-[#44444a]">ensaddress.eth</span>
              <span className="text-[9px] leading-[14px] text-[#bdbdbd]">5bz4nd...7FLPm</span>
            </div>
            <ChevronDown size={20} strokeWidth={1.500} className="ml-auto text-[#555]" />
          </div>
          <div className="ml-[14px] mt-[8px] h-[12px] text-[8.500px] font-medium leading-[12px] text-[#555]">Amount</div>
          <div className="mx-[14px] mt-[4px] flex h-[57px] flex-col justify-center rounded-[6px] bg-white pl-[10px] pr-[12px]">
            <div className="flex h-[24px] items-center">
              <TokenIcon kind="enj" size={21} />
              <span className="ml-[11px] text-[13px] font-semibold text-[#44444a]">ENJ</span>
              <span className="ml-[5px] text-[8.500px] text-[#c0c0c0]">Enjin Network</span>
              <span className="ml-auto text-[19.500px] font-medium text-[#44444a]">1,500</span>
              <span className="ml-[1px] h-[20px] w-[1.500px] bg-[#8f7fe0]" />
            </div>
            <div className="mt-[2px] flex h-[16px] items-center text-[8.500px] text-[#c0c0c0]">
              Available Balance
              <span className="ml-[8px] rounded-[3px] border border-[#f0f0f0] px-[6px] py-[1px] text-[7px] font-semibold text-[#777]">MAX</span>
            </div>
          </div>
          <div className="mx-[13px] mt-[14px] flex h-[45px] items-center gap-[12px] rounded-[6px] border-[1.500px] border-[#f8d690] bg-[#fffefa] pl-[12px]">
            <TriangleAlert size={19} strokeWidth={1.800} className="shrink-0 text-[#f5bd55]" />
            <p className="text-[10px] leading-[13px] text-[#777]">Max reduced by 0.2 ENJ to account for<br />existential deposit</p>
          </div>
          <div className="ml-[14px] mt-[14px] h-[12px] text-[8.500px] font-medium leading-[12px] text-[#555]">Best Pool</div>
          <div className="mx-[13px] mt-[3px] h-[59px] rounded-[6px] bg-white px-[13px] pt-[12px]">
            <div className="flex items-center justify-between text-[13.500px] leading-[20px] text-[#555]">
              <span>Enjin Staking Pool #1</span>
              <span className="text-[14px] font-semibold">47.5%</span>
            </div>
            <div className="mt-[1px] text-right text-[8px] leading-[12px] text-[#c0c0c0]">Recent Rate</div>
          </div>
          <div className="mx-[13px] mt-[13px] flex h-[38px] items-center justify-center rounded-[5px] bg-[#6a5bc3] text-[12.500px] font-semibold text-white">Next</div>
          <div className="mx-[13px] mt-[12px] flex h-[44px] items-center gap-[12px] rounded-[6px] border border-[#f5f5f5] pl-[12px]">
            <InfoBlob size={19} />
            <p className="text-[10px] leading-[13px] text-[#777]">Rewards are distributed daily, and you may<br />withdraw your stake anytime.</p>
          </div>
        </Frame>
        <Frame label="Select address" pos="left-[2725px] top-[1331px]" height="h-[685px]" bg="bg-[#1b1826]">
          <SelectAddress />
        </Frame>
      </div>
    </div>
  );
}
